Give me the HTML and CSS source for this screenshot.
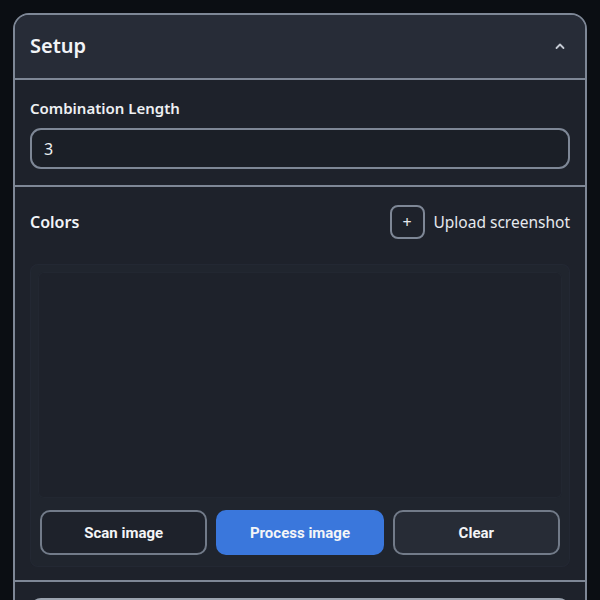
FILE: index.html
```html
<!DOCTYPE html>
<html lang="en">
<head>
<meta charset="utf-8">
<title>Setup</title>
<link rel="stylesheet" href="styles.css">
</head>
<body>
<div class="card">
  <div class="card-header">
    <h2 class="card-title">Setup</h2>
    <svg class="chevron" width="12" height="8" viewBox="0 0 12 8"><path d="M2.5 6 L6 2.5 L9.5 6" fill="none" stroke="#c4c9d2" stroke-width="1.8" stroke-linecap="round" stroke-linejoin="round"/></svg>
  </div>
  <div class="section">
    <label class="field-label">Combination Length</label>
    <div class="input">3</div>
  </div>
  <div class="section section-colors">
    <div class="row-head">
      <span class="section-title">Colors</span>
      <div class="upload">
        <span class="plus-btn">+</span>
        <span class="upload-text">Upload screenshot</span>
      </div>
    </div>
    <div class="dropzone">
      <div class="preview"></div>
      <div class="actions">
        <button class="btn btn-outline">Scan image</button>
        <button class="btn btn-primary">Process image</button>
        <button class="btn btn-muted">Clear</button>
      </div>
    </div>
  </div>
  <div class="section section-next">
    <div class="input input-empty"></div>
  </div>
</div>
</body>
</html>
```
FILE: styles.css
```css
html, body {
  margin: 0;
  padding: 0;
  background: #0b0e13;
}
body {
  padding: 12px 12px 0 12px;
  font-family: "Noto Sans", "Open Sans", sans-serif;
  color: #eef0f3;
  height: 600px;
  overflow: hidden;
  box-sizing: border-box;
}
.card {
  border: 2px solid #7e8796;
  border-radius: 16px;
  background: #1e222b;
  overflow: hidden;
  margin-left: 1px;
  margin-top: 1px;
  width: 574px;
  box-sizing: border-box;
}
.card-header {
  height: 63px;
  background: #272c37;
  display: flex;
  align-items: center;
  justify-content: space-between;
  padding: 0 15px;
  border-bottom: 2px solid #7e8796;
}
.card-title {
  margin: 0 0 2px 0;
  font-size: 20px;
  font-weight: 600;
  color: #f2f4f7;
}
.chevron {
  margin-right: 4px;
  margin-bottom: 2px;
}
.section {
  padding: 18px 15px 16px 15px;
  border-bottom: 2px solid #7e8796;
}
.field-label {
  display: block;
  font-size: 15px;
  font-weight: 600;
  line-height: 20px;
  color: #eef0f3;
  margin-bottom: 10px;
}
.input {
  height: 41px;
  box-sizing: border-box;
  border: 2px solid #7e8796;
  border-radius: 11px;
  background: #1b1f27;
  padding: 0 12px;
  display: flex;
  align-items: center;
  font-size: 16px;
  color: #eef0f3;
}
.section-colors {
  padding-top: 18px;
  padding-bottom: 13px;
}
.row-head {
  display: flex;
  align-items: center;
  justify-content: space-between;
  margin-bottom: 25px;
}
.section-title {
  font-size: 16px;
  font-weight: 600;
  color: #f2f4f7;
}
.upload {
  display: flex;
  align-items: center;
  gap: 9px;
}
.plus-btn {
  width: 35px;
  height: 34px;
  box-sizing: border-box;
  border: 2px solid #7e8796;
  border-radius: 8px;
  display: flex;
  align-items: center;
  justify-content: center;
  font-size: 16px;
  color: #e6e9ee;
}
.upload-text {
  font-size: 15.5px;
  color: #e6e9ee;
}
.dropzone {
  border-radius: 8px;
  background: #20252e;
  padding: 8px 8px 12px 8px;
  box-shadow: inset 0 0 0 1px #232833;
}
.preview {
  height: 226px;
  background: #1e222b;
  border-radius: 6px;
  box-shadow: inset 0 0 0 1px #222731;
  margin-bottom: 12px;
}
.actions {
  display: flex;
  gap: 9px;
  padding: 0 2px;
}
.btn {
  flex: 1;
  height: 45px;
  border-radius: 10px;
  font-family: Roboto, "Noto Sans", sans-serif;
  font-size: 15px;
  font-weight: 700;
  color: #f4f5f7;
  border: 2px solid #727b89;
  background: #1e222b;
}
.btn-primary {
  background: #3a77dc;
  border-color: #3a77dc;
}
.btn-muted {
  background: #272c36;
}
.section-next {
  padding-top: 16px;
  border-bottom: none;
}
.input-empty {
  border-color: #9aa2ae;
}
```
